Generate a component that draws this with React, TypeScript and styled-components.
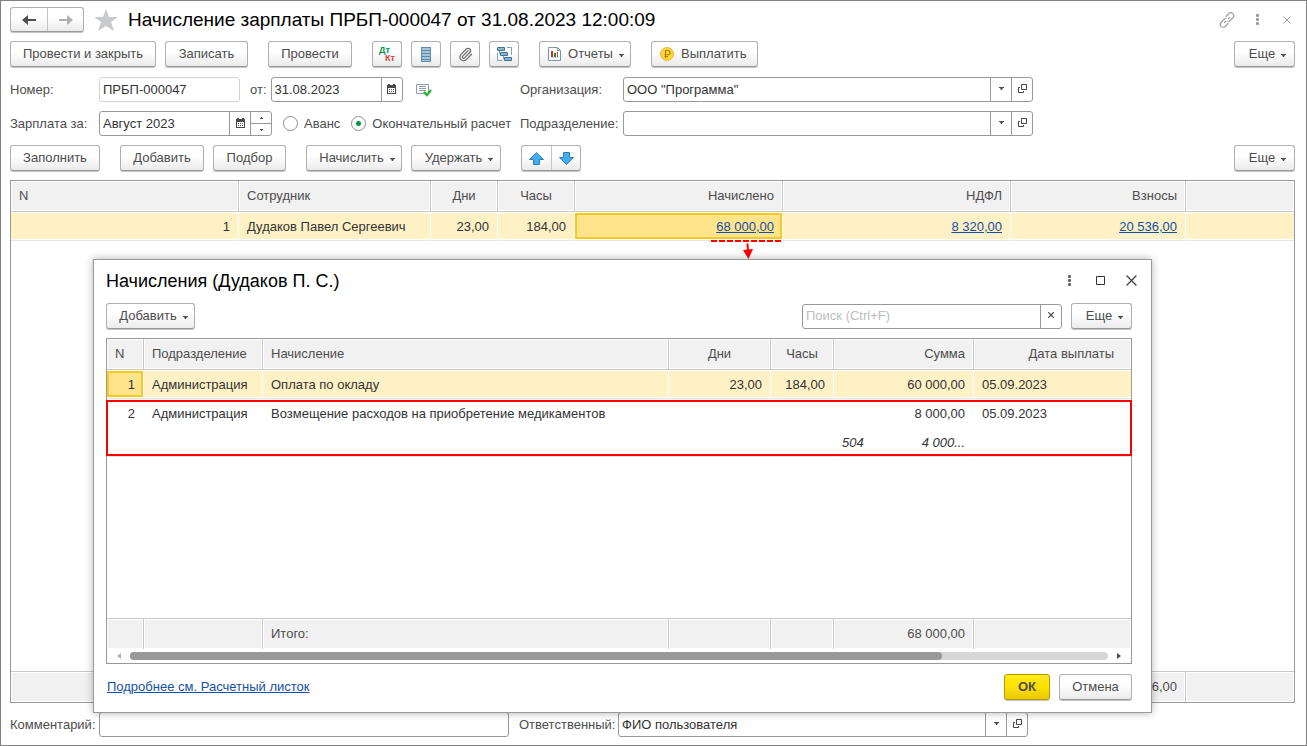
import React from 'react';
import styled, { createGlobalStyle, css } from 'styled-components';
import { Paperclip } from 'lucide-react';

const GlobalStyle = createGlobalStyle`
  * { box-sizing: border-box; }
  body {
    margin: 0;
    background: #fff;
    color: #4d4d4d;
    font: 13px/16px "Liberation Sans", Arial, sans-serif;
  }
  button, input { font: inherit; color: inherit; }
`;

const Window = styled.main`
  position: relative;
  display: flex;
  flex-direction: column;
  min-height: 100vh;
  padding: 6px 11px 8px 9px;
  border: 1px solid #808080;
`;

const Header = styled.header`
  display: flex;
  align-items: center;
  height: 25px;
  margin-bottom: 9px;
`;

const Title = styled.h1`
  flex: 1;
  margin: 0;
  color: #000;
  font-size: 19px;
  line-height: 24px;
  font-weight: 400;
  white-space: nowrap;
`;

const StarButton = styled.button`
  display: flex;
  margin: 0 10px;
  padding: 0;
  border: 0;
  background: none;
`;

const WindowActions = styled.div`
  display: flex;
  align-items: center;
  gap: 14px;
`;

const DialogActions = styled(WindowActions)`
  gap: 15px;
`;

const GlyphButton = styled.button`
  display: flex;
  align-items: center;
  justify-content: center;
  width: 16px;
  height: 16px;
  padding: 0;
  border: 0;
  background: none;
`;

const Bar = styled.div`
  display: flex;
  align-items: flex-start;
  gap: 20px;
  height: 27px;
  margin-bottom: ${(p: { $gap?: number }) => p.$gap ?? 9}px;
`;

const Group = styled.div`
  display: flex;
  align-items: center;
  gap: 9px;
`;

const Spacer = styled.div`
  flex: 1;
`;

const raised = css`
  border: 1px solid #b0b0b0;
  border-bottom-color: #989898;
  border-radius: 3px;
  background: linear-gradient(#fff 40%, #ebebeb);
  box-shadow: 0 1px 0 #c4c4c4;
`;

const Button = styled.button<{ $w?: number; $primary?: boolean; $start?: boolean }>`
  ${raised}
  display: flex;
  align-items: center;
  justify-content: ${(p) => (p.$start ? 'flex-start' : 'center')};
  min-width: ${(p) => p.$w ?? 30}px;
  height: 26px;
  padding: 0 ${(p) => (p.$start ? 8 : 4)}px;
  white-space: nowrap;
  ${(p) =>
    p.$primary &&
    css`
      border-color: #b09a00;
      background: linear-gradient(#ffea1a, #ffe000 50%, #e9c900);
      font-weight: 700;
    `}
`;

const ButtonIcon = styled.span`
  display: flex;
  margin-right: 7px;
`;

const Pair = styled.div<{ $h: number }>`
  ${raised}
  display: flex;
  height: ${(p) => p.$h}px;
`;

const PairButton = styled.button<{ $w: number }>`
  display: flex;
  align-items: center;
  justify-content: center;
  width: ${(p) => p.$w}px;
  padding: 0;
  border: 0;
  background: none;
  & + & {
    border-left: 1px solid #c4c4c4;
  }
`;

const FormRow = styled.div`
  display: flex;
  align-items: center;
  height: 25px;
  margin-bottom: 9px;
`;

const FormHalf = styled.div<{ $w?: number }>`
  display: flex;
  align-items: center;
  flex: ${(p) => (p.$w ? `0 0 ${p.$w}px` : '1')};
`;

const Label = styled.label<{ $w?: number }>`
  flex: none;
  width: ${(p) => (p.$w ? `${p.$w}px` : 'auto')};
  white-space: nowrap;
`;

const Field = styled.div<{ $w: number; $dim?: boolean }>`
  display: flex;
  flex: 0 1 ${(p) => p.$w}px;
  height: 25px;
  overflow: hidden;
  border: 1px solid ${(p) => (p.$dim ? '#d2d2d2' : '#999')};
  border-radius: 3px;
  background: #fff;
`;

const TextInput = styled.input`
  flex: 1;
  min-width: 0;
  padding: 0 3px;
  border: 0;
  outline: 0;
  background: none;
  color: #333;
  &::placeholder {
    color: #bdbdbd;
    opacity: 1;
  }
`;

const FieldButton = styled.button`
  display: flex;
  align-items: center;
  justify-content: center;
  flex: none;
  width: 21px;
  padding: 0 0 2px;
  border: 0;
  border-left: 1px solid #999;
  background: none;
`;

const Spin = styled.div`
  display: flex;
  flex-direction: column;
  width: 21px;
  border-left: 1px solid #999;
`;

const SpinButton = styled.button`
  display: flex;
  flex: 1;
  align-items: center;
  justify-content: center;
  padding: 0;
  border: 0;
  background: none;
  & + & {
    border-top: 1px solid #999;
  }
`;

const StatusIcon = styled.span`
  display: flex;
  margin-left: 13px;
`;

const FromLabel = styled(Label)`
  margin: 0 4px 0 10px;
`;

const RadioLabel = styled.label`
  display: flex;
  align-items: center;
  gap: 6px;
  margin-left: 11px;
  white-space: nowrap;
`;

const Radio = styled.input`
  appearance: none;
  width: 15px;
  height: 15px;
  margin: 0;
  border: 1px solid #8c8c8c;
  border-radius: 50%;
  &:checked {
    background: radial-gradient(circle, #009646 0 2px, transparent 3px);
  }
`;

const TableFrame = styled.div<{ $h?: number }>`
  position: relative;
  display: flex;
  flex-direction: column;
  flex: ${(p) => (p.$h ? 'none' : '1')};
  min-height: ${(p) => p.$h ?? 300}px;
  border: 1px solid #999;
`;

const Table = styled.table`
  width: 100%;
  table-layout: fixed;
  border-spacing: 0;
`;

type CellProps = { $align?: 'left' | 'right' | 'center'; $endPad?: number };

const HeadCell = styled.th<CellProps>`
  height: 31px;
  padding: 0 ${(p) => p.$endPad ?? 8}px 0 8px;
  border-right: 1px solid #c8c8c8;
  border-bottom: 1px solid #c8c8c8;
  background: #f1f1f1;
  box-shadow: inset 0 0 0 1px #fff;
  font-weight: 400;
  text-align: ${(p) => p.$align ?? 'left'};
  white-space: nowrap;
  &:last-child {
    border-right: 0;
  }
`;

const TotalCell = styled.td<CellProps>`
  height: 31px;
  padding: 0 8px;
  border-top: 1px solid #c8c8c8;
  border-right: 1px solid #c8c8c8;
  background: #f1f1f1;
  box-shadow: inset 0 0 0 1px #fff;
  text-align: ${(p) => p.$align ?? 'left'};
  white-space: nowrap;
  &:last-child {
    border-right: 0;
  }
`;

const Row = styled.tr<{ $selected?: boolean; $plain?: boolean }>`
  color: #333;
  td {
    background: ${(p) => (p.$selected ? '#fef1c6' : '#fff')};
    border-bottom-color: ${(p) => (p.$plain ? '#fff' : '#e6e6e6')};
  }
`;

const Cell = styled.td<CellProps & { $active?: boolean }>`
  position: relative;
  height: 29px;
  padding: 2px 8px 0;
  border-right: 1px solid #fff;
  border-bottom: 1px solid #e6e6e6;
  box-shadow: inset 0 1px 0 #fff, inset 0 -1px 0 #fff;
  text-align: ${(p) => p.$align ?? 'left'};
  white-space: nowrap;
  &:last-child {
    border-right: 0;
  }
  ${(p) =>
    p.$active &&
    css`
      && {
        background: #ffe48c;
      }
      &::before {
        content: '';
        position: absolute;
        inset: 1px 0;
        border: 2px solid #fac81e;
      }
    `}
`;

const Split = styled.div`
  display: flex;
  justify-content: space-between;
  font-style: italic;
`;

const Link = styled.a`
  position: relative;
  color: #1350a8;
  text-decoration: underline;
`;

const Pointer = styled.svg`
  position: absolute;
  top: 28px;
  right: 0;
`;

const Highlight = styled.div`
  position: absolute;
  top: 61px;
  left: -1px;
  right: -1px;
  height: 56px;
  border: 2px solid #f00;
  pointer-events: none;
`;

const BottomRow = styled(FormRow)`
  margin: 9px 0 0;
`;

const Dialog = styled.section`
  position: absolute;
  top: 258px;
  left: 92px;
  right: 154px;
  padding: 0 19px 12px 12px;
  border: 1px solid #999;
  background: #fff;
  box-shadow: 0 0 8px rgba(0, 0, 0, 0.3);
`;

const DialogHeader = styled.header`
  display: flex;
  align-items: center;
  height: 43px;
  margin-right: -7px;
  padding-bottom: 2px;
`;

const DialogTitle = styled.h2`
  flex: 1;
  margin: 0;
  color: #000;
  font-size: 18px;
  line-height: 24px;
  font-weight: 400;
`;

const DialogFooter = styled.footer`
  display: flex;
  align-items: center;
  justify-content: space-between;
  height: 27px;
  margin-top: 9px;
`;

const DetailsLink = styled(Link)`
  margin-left: 1px;
`;

const ScrollRow = styled.div`
  display: flex;
  align-items: center;
  gap: 9px;
  height: 14px;
  padding: 0 10px;
`;

const ScrollTrack = styled.div`
  flex: 1;
  height: 8px;
  border-radius: 4px;
  background: #d6d6d6;
`;

const ScrollThumb = styled.div`
  width: 83%;
  height: 8px;
  border-radius: 4px;
  background: #999;
`;

const Caret = () => (
  <svg width="5" height="3" viewBox="0 0 5 3">
    <path d="M0 0h5v1H4L3 3H2L1 1H0z" fill="#4d4d4d" />
  </svg>
);

const CaretSlot = styled.span`
  display: flex;
  margin: 2px 0 0 6px;
`;

const MenuButton = styled(Button)<{ $icon?: boolean }>`
  padding: 0 6px 0 ${(p) => (p.$icon ? 8 : 12)}px;
`;

const Menu = ({ w, icon, children }: { w: number; icon?: React.ReactNode; children: React.ReactNode }) => (
  <MenuButton $w={w} $icon={!!icon}>
    {icon && <ButtonIcon>{icon}</ButtonIcon>}
    {children}
    <CaretSlot>
      <Caret />
    </CaretSlot>
  </MenuButton>
);

const Arrow = ({ color, flip }: { color: string; flip?: boolean }) => (
  <svg width="14" height="10" viewBox="0 0 14 10">
    <path d={flip ? 'M14 5L8 0v4H0v2h8v4z' : 'M0 5l6-5v4h8v2H6v4z'} fill={color} />
  </svg>
);

const Star = () => (
  <svg width="24" height="22" viewBox="0 0 24 22">
    <path d="M12 0l3 8h9l-7 5 3 9-8-5-8 5 3-9-7-5h9z" fill="#c9cacc" />
  </svg>
);

const LinkIcon = () => (
  <svg width="16" height="16" viewBox="0 0 16 16" fill="none" stroke="#9b9b9b" strokeWidth="1.2" strokeLinecap="round">
    <path d="M7 4.500l2.500-2.700a2.800 2.800 0 0 1 4.500 3.700l-3 3.200a2.800 2.800 0 0 1-2 .8M9 11.500l-2.500 2.700a2.800 2.800 0 0 1-4.500-3.700l3-3.200a2.800 2.800 0 0 1 2-.8M5.500 10.500l1-1M9.500 6.500l1-1" />
  </svg>
);

const Dots = ({ color }: { color: string }) => (
  <svg width="3" height="11" viewBox="0 0 3 11" fill={color}>
    <rect width="3" height="3" rx="1" />
    <rect y="4" width="3" height="3" rx="1" />
    <rect y="8" width="3" height="3" rx="1" />
  </svg>
);

const Cross = ({ size, color, weight = 1.2 }: { size: number; color: string; weight?: number }) => (
  <svg width={size} height={size} viewBox="0 0 10 10" fill="none" stroke={color} strokeWidth={weight}>
    <path d="M.5.5l9 9M9.500.5l-9 9" />
  </svg>
);

const Square = () => (
  <svg width="9" height="9" viewBox="0 0 9 9">
    <path d="M.5.5h8v8h-8z" fill="none" stroke="#333" />
  </svg>
);

const Calendar = () => (
  <svg width="9" height="10" viewBox="0 0 9 10" fill="#4a4a4a">
    <path d="M0 1h1V0h2v1h3V0h2v1h1v9H0zM1 4v5h7V4z" fillRule="evenodd" />
    <path d="M2 5h1v1H2zM4 5h1v1H4zM6 5h1v1H6zM2 7h1v1H2zM4 7h1v1H4zM6 7h1v1H6z" />
  </svg>
);

const OpenIcon = () => (
  <svg width="9" height="9" viewBox="0 0 9 9" fill="none" stroke="#444">
    <path d="M3.500.5h5v5h-5zM2 3.500H.5v5h5V7" />
  </svg>
);

const MiniArrow = ({ down }: { down?: boolean }) => (
  <svg width="3" height="2" viewBox="0 0 3 2">
    <path d={down ? 'M0 0h3v1H2v1H1V1H0z' : 'M0 2h3V1H2V0H1v1H0z'} fill="#4d4d4d" />
  </svg>
);

const DtKt = () => (
  <svg width="18" height="18" viewBox="0 0 18 18" fontFamily="Liberation Sans, sans-serif" fontSize="9" fontWeight="700">
    <text x="1" y="8" fill="#009646">Дт</text>
    <text x="7" y="16" fill="#e03c3c">Кт</text>
  </svg>
);

const Register = () => (
  <svg width="10" height="15" viewBox="0 0 10 15">
    <path d="M0 0h10v15H0z" fill="#5f8cab" />
    <path d="M1 1h8v2H1zM1 4h8v2H1zM1 7h8v2H1zM1 10h8v2H1zM1 13h8v1H1z" fill="#a5c3d9" />
  </svg>
);

const Structure = () => (
  <svg width="15" height="15" viewBox="0 0 15 15">
    <path d="M10 .5h4.500V8M.5 5.500v8H5M2.500 3.500v3h1M6.500 9v3h1" fill="none" stroke="#7ba3bf" />
    <path d="M.5.500h7v3h-7zM3.500 5.500h7v3h-7zM7.500 10.500h7v3h-7z" fill="#8fb5d0" stroke="#3f7299" />
  </svg>
);

const Report = () => (
  <svg width="13" height="14" viewBox="0 0 13 14">
    <path d="M.5.500h9l3 3v10H.5z" fill="#fff" stroke="#7e95a8" />
    <path d="M9.500.500v3h3" fill="none" stroke="#7e95a8" />
    <path d="M3 4h2v6H3z" fill="#e02a20" />
    <path d="M6 6h2v4H6z" fill="#00963c" />
    <path d="M9 5h1v5H9z" fill="#f04a30" />
    <path d="M3 10h7v1H3z" fill="#c5d0d8" />
  </svg>
);

const Coin = () => (
  <svg width="14" height="14" viewBox="0 0 14 14">
    <circle cx="7" cy="7" r="6.500" fill="#fdd535" stroke="#edb92a" />
    <path d="M5.500 11V3.500H8a2 2 0 0 1 0 4.200H4.500M4.500 9.500H8" fill="none" stroke="#b07c00" strokeWidth="1.100" />
  </svg>
);

const Posted = () => (
  <svg width="16" height="14" viewBox="0 0 16 14">
    <path d="M.5 1.500h12v9H.5z" fill="#fff" stroke="#8c9eb0" />
    <path d="M3 3.500h7M3 5.500h7M3 7.500h7" stroke="#8c9eb0" />
    <path d="M8 9l3 3 4-5" fill="none" stroke="#35b537" strokeWidth="2.500" />
  </svg>
);

const Move = ({ down }: { down?: boolean }) => (
  <svg width="15" height="13" viewBox="0 0 15 13">
    <path
      d={down ? 'M4.500.5h6v5h4L7.500 12.500.5 5.500h4z' : 'M7.500.5l7 7h-4v5h-6v-5h-4z'}
      fill="#40aef0"
      stroke="#2e7fb5"
    />
  </svg>
);

const ScrollArrow = ({ right }: { right?: boolean }) => (
  <svg width="4" height="6" viewBox="0 0 4 6">
    <path d={right ? 'M0 0l4 3-4 3z' : 'M4 0L0 3l4 3z'} fill={right ? '#4d4d4d' : '#b5b5b5'} />
  </svg>
);

const SelectField = ({ id, value }: { id: string; value?: string }) => (
  <Field $w={410}>
    <TextInput id={id} defaultValue={value} />
    <FieldButton aria-label="Выбрать">
      <Caret />
    </FieldButton>
    <FieldButton aria-label="Открыть">
      <OpenIcon />
    </FieldButton>
  </Field>
);

const Columns = ({ widths }: { widths: (number | undefined)[] }) => (
  <colgroup>
    {widths.map((width, i) => (
      <col key={i} style={{ width }} />
    ))}
  </colgroup>
);

const staffColumns = [228, 192, 67, 77, 208, 228, 175, undefined];
const accrualColumns = [37, 119, undefined, 102, 63, 140, 157];

export default function App() {
  return (
    <>
      <GlobalStyle />
      <Window>
        <Header>
          <Pair $h={25}>
            <PairButton $w={36} aria-label="Назад"><Arrow color="#4d4d4d" /></PairButton>
            <PairButton $w={36} aria-label="Вперед"><Arrow color="#b0b0b0" flip /></PairButton>
          </Pair>
          <StarButton aria-label="В избранное"><Star /></StarButton>
          <Title>Начисление зарплаты ПРБП-000047 от 31.08.2023 12:00:09</Title>
          <WindowActions>
            <GlyphButton aria-label="Ссылка"><LinkIcon /></GlyphButton>
            <GlyphButton aria-label="Меню"><Dots color="#9b9b9b" /></GlyphButton>
            <GlyphButton aria-label="Закрыть"><Cross size={8} color="#9b9b9b" /></GlyphButton>
          </WindowActions>
        </Header>

        <Bar>
          <Group>
            <Button $w={146}>Провести и закрыть</Button>
            <Button $w={83}>Записать</Button>
          </Group>
          <Button $w={84}>Провести</Button>
          <Group>
            <Button aria-label="Проводки"><DtKt /></Button>
            <Button aria-label="Регистры"><Register /></Button>
            <Button aria-label="Файлы"><Paperclip size={15} color="#6e6e6e" strokeWidth={2} /></Button>
            <Button aria-label="Структура"><Structure /></Button>
          </Group>
          <Menu w={92} icon={<Report />}>Отчеты</Menu>
          <Button $w={107} $start><ButtonIcon><Coin /></ButtonIcon>Выплатить</Button>
          <Spacer />
          <Menu w={61}>Еще</Menu>
        </Bar>

        <FormRow>
          <FormHalf $w={510}>
            <Label $w={89} htmlFor="number">Номер:</Label>
            <Field $w={141} $dim><TextInput id="number" defaultValue="ПРБП-000047" /></Field>
            <FromLabel htmlFor="date">от:</FromLabel>
            <Field $w={132}>
              <TextInput id="date" defaultValue="31.08.2023" />
              <FieldButton aria-label="Календарь"><Calendar /></FieldButton>
            </Field>
            <StatusIcon><Posted /></StatusIcon>
          </FormHalf>
          <FormHalf>
            <Label $w={103} htmlFor="org">Организация:</Label>
            <SelectField id="org" value={'ООО "Программа"'} />
          </FormHalf>
        </FormRow>

        <FormRow>
          <FormHalf $w={510}>
            <Label $w={89} htmlFor="period">Зарплата за:</Label>
            <Field $w={173}>
              <TextInput id="period" defaultValue="Август 2023" />
              <FieldButton aria-label="Календарь"><Calendar /></FieldButton>
              <Spin>
                <SpinButton aria-label="Больше"><MiniArrow /></SpinButton>
                <SpinButton aria-label="Меньше"><MiniArrow down /></SpinButton>
              </Spin>
            </Field>
            <RadioLabel><Radio type="radio" name="kind" />Аванс</RadioLabel>
            <RadioLabel><Radio type="radio" name="kind" defaultChecked />Окончательный расчет</RadioLabel>
          </FormHalf>
          <FormHalf>
            <Label $w={103} htmlFor="dept">Подразделение:</Label>
            <SelectField id="dept" />
          </FormHalf>
        </FormRow>

        <Bar $gap={8}>
          <Button $w={90}>Заполнить</Button>
          <Group>
            <Button $w={84}>Добавить</Button>
            <Button $w={73}>Подбор</Button>
          </Group>
          <Group>
            <Menu w={96}>Начислить</Menu>
            <Menu w={90}>Удержать</Menu>
          </Group>
          <Pair $h={26}>
            <PairButton $w={29} aria-label="Вверх"><Move /></PairButton>
            <PairButton $w={29} aria-label="Вниз"><Move down /></PairButton>
          </Pair>
          <Spacer />
          <Menu w={61}>Еще</Menu>
        </Bar>

        <TableFrame>
          <Table>
            <Columns widths={staffColumns} />
            <thead>
              <tr>
                <HeadCell>N</HeadCell>
                <HeadCell>Сотрудник</HeadCell>
                <HeadCell $align="center">Дни</HeadCell>
                <HeadCell $align="center">Часы</HeadCell>
                <HeadCell $align="right">Начислено</HeadCell>
                <HeadCell $align="right">НДФЛ</HeadCell>
                <HeadCell $align="right">Взносы</HeadCell>
                <HeadCell />
              </tr>
            </thead>
            <tbody>
              <Row $selected>
                <Cell $align="right">1</Cell>
                <Cell>Дудаков Павел Сергеевич</Cell>
                <Cell $align="right">23,00</Cell>
                <Cell $align="right">184,00</Cell>
                <Cell $align="right" $active>
                  <Link href="#accruals">68 000,00</Link>
                  <Pointer width="71" height="20" viewBox="0 0 71 20">
                    <path d="M0 1h70" stroke="#f00" strokeWidth="2" strokeDasharray="6 2" />
                    <path d="M36.500 3.500L37 12" stroke="#f00" strokeWidth="2" />
                    <path d="M32 10l10-1-4.500 10z" fill="#f00" />
                  </Pointer>
                </Cell>
                <Cell $align="right"><Link href="#tax">8 320,00</Link></Cell>
                <Cell $align="right"><Link href="#contributions">20 536,00</Link></Cell>
                <Cell />
              </Row>
            </tbody>
          </Table>
          <Spacer />
          <Table>
            <Columns widths={staffColumns} />
            <tbody>
              <tr>
                <TotalCell />
                <TotalCell />
                <TotalCell />
                <TotalCell />
                <TotalCell $align="right">68 000,00</TotalCell>
                <TotalCell $align="right">8 320,00</TotalCell>
                <TotalCell $align="right">20 536,00</TotalCell>
                <TotalCell />
              </tr>
            </tbody>
          </Table>
        </TableFrame>

        <BottomRow>
          <FormHalf $w={509}>
            <Label $w={89} htmlFor="comment">Комментарий:</Label>
            <Field $w={410}><TextInput id="comment" /></Field>
          </FormHalf>
          <FormHalf>
            <Label $w={99} htmlFor="owner">Ответственный:</Label>
            <SelectField id="owner" value="ФИО пользователя" />
          </FormHalf>
        </BottomRow>

        <Dialog role="dialog" aria-labelledby="dialog-title">
          <DialogHeader>
            <DialogTitle id="dialog-title">Начисления (Дудаков П. С.)</DialogTitle>
            <DialogActions>
              <GlyphButton aria-label="Меню"><Dots color="#666" /></GlyphButton>
              <GlyphButton aria-label="Развернуть"><Square /></GlyphButton>
              <GlyphButton aria-label="Закрыть"><Cross size={11} color="#444" /></GlyphButton>
            </DialogActions>
          </DialogHeader>

          <Bar $gap={8}>
            <Menu w={89}>Добавить</Menu>
            <Spacer />
            <Group>
              <Field $w={260}>
                <TextInput aria-label="Поиск" placeholder="Поиск (Ctrl+F)" size={29} />
                <FieldButton aria-label="Очистить"><Cross size={6} color="#444" weight={2} /></FieldButton>
              </Field>
              <Menu w={61}>Еще</Menu>
            </Group>
          </Bar>

          <TableFrame $h={326}>
            <Table>
              <Columns widths={accrualColumns} />
              <thead>
                <tr>
                  <HeadCell>N</HeadCell>
                  <HeadCell>Подразделение</HeadCell>
                  <HeadCell>Начисление</HeadCell>
                  <HeadCell $align="center">Дни</HeadCell>
                  <HeadCell $align="center">Часы</HeadCell>
                  <HeadCell $align="right">Сумма</HeadCell>
                  <HeadCell $align="right" $endPad={17}>Дата выплаты</HeadCell>
                </tr>
              </thead>
              <tbody>
                <Row $selected>
                  <Cell $align="right" $active>1</Cell>
                  <Cell>Администрация</Cell>
                  <Cell>Оплата по окладу</Cell>
                  <Cell $align="right">23,00</Cell>
                  <Cell $align="right">184,00</Cell>
                  <Cell $align="right">60 000,00</Cell>
                  <Cell>05.09.2023</Cell>
                </Row>
                <Row $plain>
                  <Cell $align="right">2</Cell>
                  <Cell>Администрация</Cell>
                  <Cell>Возмещение расходов на приобретение медикаментов</Cell>
                  <Cell />
                  <Cell />
                  <Cell $align="right">8 000,00</Cell>
                  <Cell>05.09.2023</Cell>
                </Row>
                <Row>
                  <Cell colSpan={5} />
                  <Cell><Split><span>504</span><span>4 000...</span></Split></Cell>
                  <Cell />
                </Row>
              </tbody>
            </Table>
            <Spacer />
            <Table>
              <Columns widths={accrualColumns} />
              <tbody>
                <tr>
                  <TotalCell />
                  <TotalCell />
                  <TotalCell>Итого:</TotalCell>
                  <TotalCell />
                  <TotalCell />
                  <TotalCell $align="right">68 000,00</TotalCell>
                  <TotalCell />
                </tr>
              </tbody>
            </Table>
            <ScrollRow>
              <ScrollArrow />
              <ScrollTrack><ScrollThumb /></ScrollTrack>
              <ScrollArrow right />
            </ScrollRow>
            <Highlight />
          </TableFrame>

          <DialogFooter>
            <DetailsLink href="#payslip">Подробнее см. Расчетный листок</DetailsLink>
            <Group>
              <Button $w={46} $primary>ОК</Button>
              <Button $w={73}>Отмена</Button>
            </Group>
          </DialogFooter>
        </Dialog>
      </Window>
    </>
  );
}
